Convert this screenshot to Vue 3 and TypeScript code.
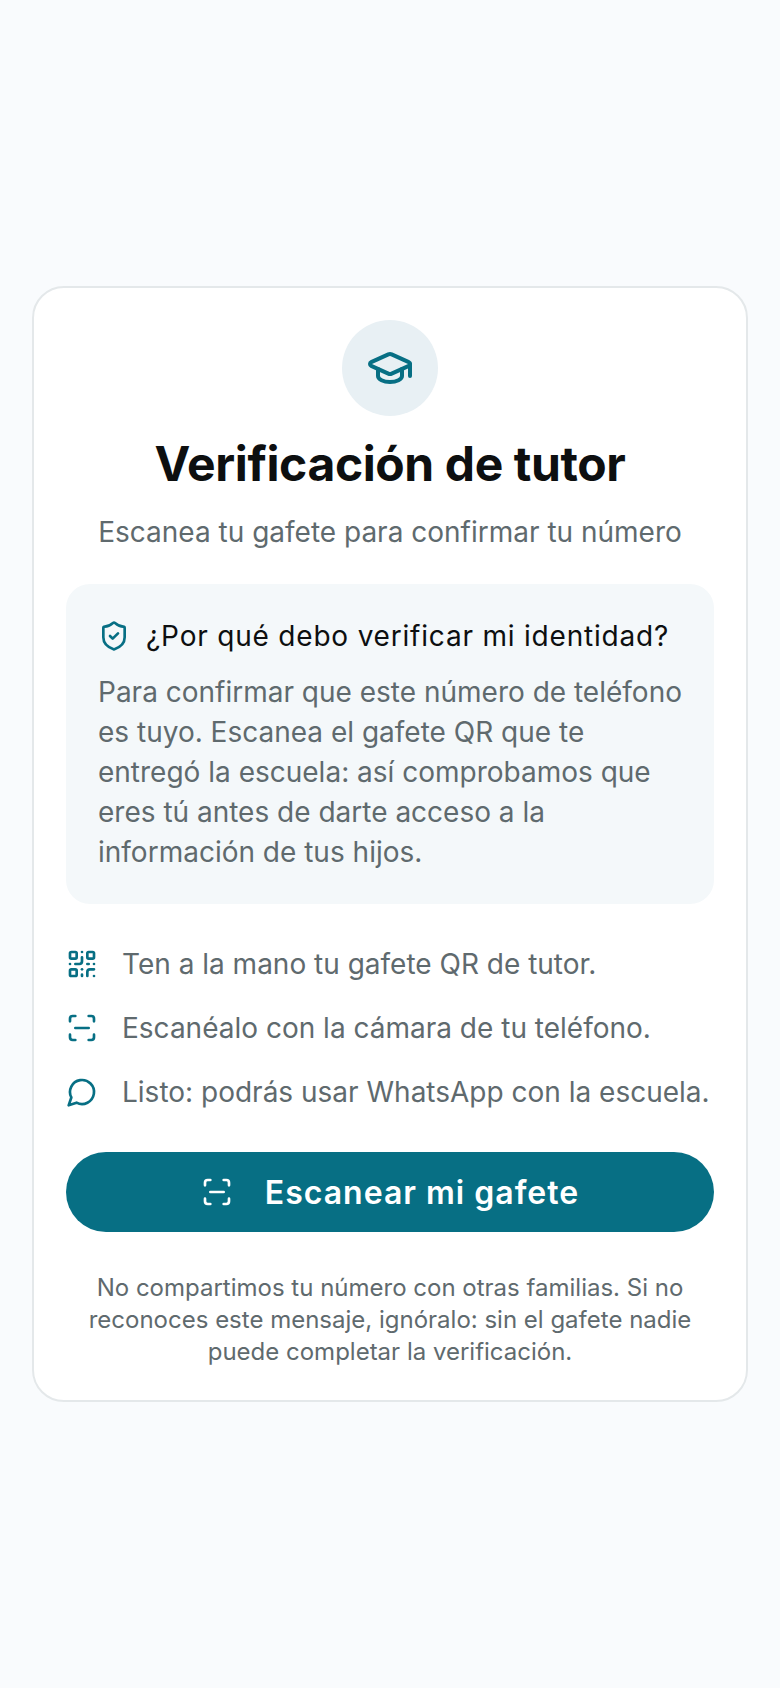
<script setup lang="ts">
const steps = [
  { icon: 'qr', text: 'Ten a la mano tu gafete QR de tutor.' },
  { icon: 'scan', text: 'Escanéalo con la cámara de tu teléfono.' },
  { icon: 'chat', text: 'Listo: podrás usar WhatsApp con la escuela.' },
]
</script>

<template>
  <main class="page">
    <section class="card">
      <div class="avatar">
        <svg width="48" height="48" viewBox="0 0 24 24" fill="none" stroke="#076f84" stroke-width="2" stroke-linecap="round" stroke-linejoin="round">
          <path d="M21.42 10.92a1 1 0 0 0-.02-1.84L12.83 5.18a2 2 0 0 0-1.66 0L2.6 9.08a1 1 0 0 0 0 1.83l8.57 3.91a2 2 0 0 0 1.66 0z" />
          <path d="M22 10v6" />
          <path d="M6 12.5V16a6 3 0 0 0 12 0v-3.5" />
        </svg>
      </div>
      <h1 class="title">Verificación de tutor</h1>
      <p class="subtitle">Escanea tu gafete para confirmar tu número</p>

      <div class="why">
        <div class="why-head">
          <svg width="32" height="32" viewBox="0 0 24 24" fill="none" stroke="#076f84" stroke-width="2" stroke-linecap="round" stroke-linejoin="round">
            <path d="M20 13c0 5-3.500 7.500-7.660 8.950a1 1 0 0 1-.67-.01C7.500 20.500 4 18 4 13V6a1 1 0 0 1 1-1c2 0 4.500-1.200 6.240-2.720a1.170 1.170 0 0 1 1.520 0C14.510 3.810 17 5 19 5a1 1 0 0 1 1 1z" />
            <path d="m9 12 2 2 4-4" />
          </svg>
          <h2 class="why-title">¿Por qué debo verificar mi identidad?</h2>
        </div>
        <p class="why-body">Para confirmar que este número de teléfono es tuyo. Escanea el gafete QR que te entregó la escuela: así comprobamos que eres tú antes de darte acceso a la información de tus hijos.</p>
      </div>

      <ul class="steps">
        <li v-for="step in steps" :key="step.icon" class="step">
          <svg width="32" height="32" viewBox="0 0 24 24" fill="none" stroke="#076f84" stroke-width="2" stroke-linecap="round" stroke-linejoin="round">
            <template v-if="step.icon === 'qr'">
              <rect width="5" height="5" x="3" y="3" rx="1" />
              <rect width="5" height="5" x="16" y="3" rx="1" />
              <rect width="5" height="5" x="3" y="16" rx="1" />
              <path d="M21 16h-3a2 2 0 0 0-2 2v3" />
              <path d="M21 21v.01" />
              <path d="M12 7v3a2 2 0 0 1-2 2H7" />
              <path d="M3 12h.01" />
              <path d="M12 3h.01" />
              <path d="M12 16v.01" />
              <path d="M16 12h1" />
              <path d="M21 12v.01" />
              <path d="M12 21v-1" />
            </template>
            <template v-else-if="step.icon === 'scan'">
              <path d="M3 7V5a2 2 0 0 1 2-2h2" />
              <path d="M17 3h2a2 2 0 0 1 2 2v2" />
              <path d="M21 17v2a2 2 0 0 1-2 2h-2" />
              <path d="M7 21H5a2 2 0 0 1-2-2v-2" />
              <path d="M7 12h10" />
            </template>
            <path v-else d="M7.900 20A9 9 0 1 0 4 16.100L2 22Z" />
          </svg>
          <span>{{ step.text }}</span>
        </li>
      </ul>

      <button class="cta" type="button">
        <svg width="32" height="32" viewBox="0 0 24 24" fill="none" stroke="#fff" stroke-width="2" stroke-linecap="round" stroke-linejoin="round">
          <path d="M3 7V5a2 2 0 0 1 2-2h2" />
          <path d="M17 3h2a2 2 0 0 1 2 2v2" />
          <path d="M21 17v2a2 2 0 0 1-2 2h-2" />
          <path d="M7 21H5a2 2 0 0 1-2-2v-2" />
          <path d="M7 12h10" />
        </svg>
        <span>Escanear mi gafete</span>
      </button>

      <p class="note">No compartimos tu número con otras familias. Si no reconoces este mensaje, ignóralo: sin el gafete nadie puede completar la verificación.</p>
    </section>
  </main>
</template>

<style scoped>
.page {
  min-height: 1688px;
  box-sizing: border-box;
  padding: 0 32px;
  display: flex;
  align-items: center;
  justify-content: center;
  background: #f9fbfd;
  font-family: Inter, "Liberation Sans", sans-serif;
}

.card {
  width: 100%;
  box-sizing: border-box;
  padding: 32px;
  display: flex;
  flex-direction: column;
  align-items: center;
  background: #fff;
  border: 2px solid #e4e8ea;
  border-radius: 32px;
}

.avatar {
  width: 96px;
  height: 96px;
  display: flex;
  align-items: center;
  justify-content: center;
  border-radius: 50%;
  background: #e8f0f4;
}

.title {
  margin: 16px 0 0;
  font-size: 48px;
  line-height: 64px;
  font-weight: 700;
  letter-spacing: -0.4px;
  color: #0d0f10;
}

.subtitle {
  margin: 16px 0 0;
  font-size: 28px;
  line-height: 40px;
  color: #5f6a6e;
}

.why {
  width: 100%;
  box-sizing: border-box;
  margin-top: 32px;
  padding: 32px;
  background: #f4f8fa;
  border-radius: 24px;
}

.why-head {
  display: flex;
  align-items: center;
  gap: 16px;
}

.why-title {
  margin: 0;
  font-size: 28px;
  line-height: 40px;
  font-weight: 400;
  letter-spacing: 0.8px;
  color: #0d0f10;
}

.why-body {
  margin: 16px 0 0;
  font-size: 28px;
  line-height: 40px;
  color: #5f6a6e;
}

.steps {
  list-style: none;
  width: 100%;
  margin: 40px 0 0;
  padding: 0;
  display: flex;
  flex-direction: column;
  gap: 24px;
}

.step {
  display: flex;
  align-items: center;
  gap: 24px;
  font-size: 28px;
  line-height: 40px;
  color: #5f6a6e;
}

.cta {
  width: 100%;
  height: 80px;
  margin-top: 40px;
  display: flex;
  align-items: center;
  justify-content: center;
  gap: 32px;
  border: 0;
  border-radius: 40px;
  background: #076f84;
  color: #fff;
  font-family: Inter, "Liberation Sans", sans-serif;
  font-size: 32px;
  font-weight: 600;
  letter-spacing: 1px;
}

.note {
  margin: 40px 0 0;
  text-align: center;
  font-size: 24px;
  line-height: 32px;
  color: #5f6a6e;
}
</style>

<style>
html,
body {
  background: #f9fbfd;
}
</style>
